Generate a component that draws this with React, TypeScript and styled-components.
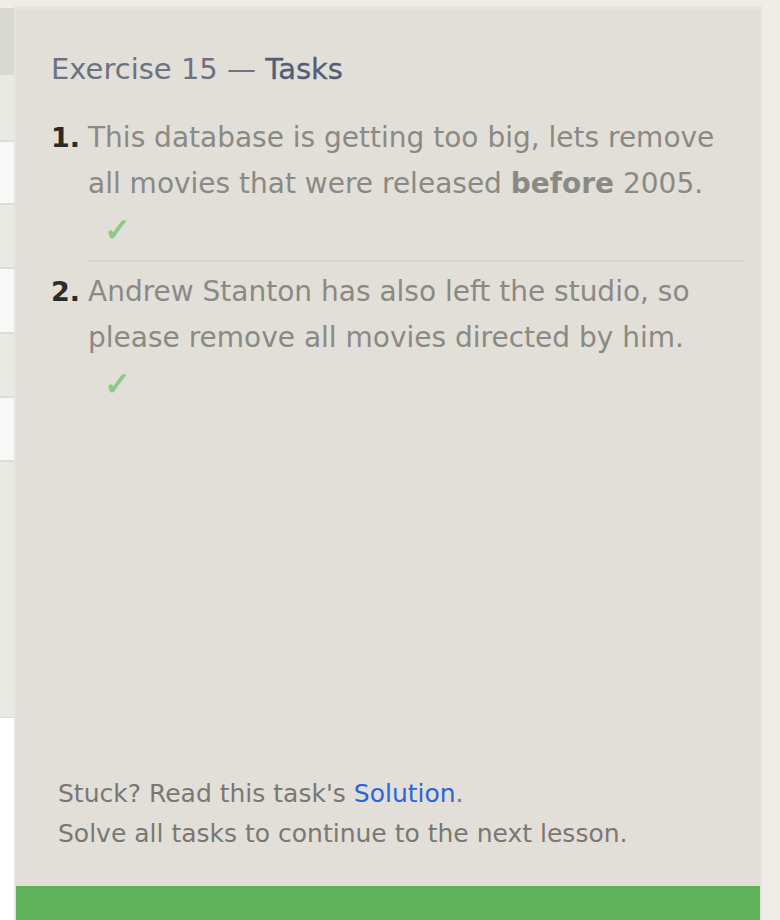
import React from "react";
import styled, { createGlobalStyle } from "styled-components";

const Global = createGlobalStyle`
  html, body { margin: 0; padding: 0; background: #efece6; }
  body { font-family: "DejaVu Sans", Verdana, sans-serif; }
  * { box-sizing: border-box; }
`;

const Page = styled.div`
  display: flex;
  align-items: flex-start;
  width: 780px;
  height: 920px;
  overflow: hidden;
  background: #efece6;
`;

const Strip = styled.div`
  width: 14px;
  margin-top: 8px;
  display: flex;
  flex-direction: column;
  flex-shrink: 0;
`;

const tones: Record<string, string> = {
  head: "#d9d9d3",
  gray: "#eaeae4",
  white: "#f8f8f8",
  line: "#dddcd7",
  plain: "#ffffff",
};

const StripCell = styled.div<{ $tone: string; $h: number }>`
  height: ${(p) => p.$h}px;
  background: ${(p) => tones[p.$tone]};
`;

const Panel = styled.div`
  width: 748px;
  height: 914px;
  margin-top: 6px;
  flex-shrink: 0;
  display: flex;
  flex-direction: column;
  background: #e1dfd8;
  border: 2px solid #e6e4de;
  border-top-width: 4px;
  border-bottom: none;
`;

const Content = styled.div`
  flex: 1;
  display: flex;
  flex-direction: column;
  padding: 42px 16px 0 35px;
`;

const Heading = styled.h2`
  margin: 0;
  font-size: 29px;
  line-height: 34px;
  font-weight: normal;
  color: #6c7282;
`;

const HeadStrong = styled.span`
  color: #535d75;
  -webkit-text-stroke: 0.3px #535d75;
`;

const TaskList = styled.ol`
  list-style: none;
  margin: 29px 0 0;
  padding: 0;
`;

const Task = styled.li`
  display: grid;
  grid-template-columns: 37px 1fr;
`;

const Num = styled.span`
  font-size: 27px;
  line-height: 46px;
  font-weight: bold;
  color: #2b2b2b;
`;

const Body = styled.div<{ $divider: boolean }>`
  border-bottom: ${(p) => (p.$divider ? "2px solid #d7d5c9" : "none")};
  margin-bottom: ${(p) => (p.$divider ? "7px" : "0")};
`;

const Text = styled.p`
  margin: 0;
  font-size: 28px;
  line-height: 46px;
  color: #8b8984;
`;

const Check = styled.div`
  margin: 5px 0 12px;
  padding-left: 16px;
  font-size: 32px;
  line-height: 36px;
  color: #8cc985;
  -webkit-text-stroke: 1px #8cc985;
`;

const Spacer = styled.div`
  flex: 1;
`;

const Footer = styled.div`
  padding: 0 0 32px 7px;
  font-size: 25px;
  line-height: 40px;
  color: #7b7773;
`;

const FootLine = styled.div``;

const Link = styled.a`
  color: #2f63d8;
  text-decoration: none;
`;

const GreenBar = styled.div`
  height: 34px;
  background: #5fb259;
`;

const stripRows: { tone: string; h: number }[] = [
  { tone: "head", h: 67 },
  { tone: "gray", h: 65 },
  { tone: "line", h: 2 },
  { tone: "white", h: 61 },
  { tone: "line", h: 2 },
  { tone: "gray", h: 62 },
  { tone: "line", h: 2 },
  { tone: "white", h: 63 },
  { tone: "line", h: 2 },
  { tone: "gray", h: 62 },
  { tone: "line", h: 2 },
  { tone: "white", h: 62 },
  { tone: "line", h: 2 },
  { tone: "gray", h: 255 },
  { tone: "line", h: 1 },
  { tone: "plain", h: 300 },
];

export default function App() {
  return (
    <>
      <Global />
      <Page>
        <Strip>
          {stripRows.map((r, i) => (
            <StripCell key={i} $tone={r.tone} $h={r.h} />
          ))}
        </Strip>
        <Panel>
          <Content>
            <Heading>
              Exercise 15 — <HeadStrong>Tasks</HeadStrong>
            </Heading>
            <TaskList>
              <Task>
                <Num>1.</Num>
                <Body $divider>
                  <Text>
                    This database is getting too big, lets remove all movies
                    that were released <b>before</b> 2005.
                  </Text>
                  <Check>✓</Check>
                </Body>
              </Task>
              <Task>
                <Num>2.</Num>
                <Body $divider={false}>
                  <Text>
                    Andrew Stanton has also left the studio, so please remove
                    all movies directed by him.
                  </Text>
                  <Check>✓</Check>
                </Body>
              </Task>
            </TaskList>
            <Spacer />
            <Footer>
              <FootLine>
                Stuck? Read this task's <Link href="#">Solution</Link>.
              </FootLine>
              <FootLine>Solve all tasks to continue to the next lesson.</FootLine>
            </Footer>
          </Content>
          <GreenBar />
        </Panel>
      </Page>
    </>
  );
}
